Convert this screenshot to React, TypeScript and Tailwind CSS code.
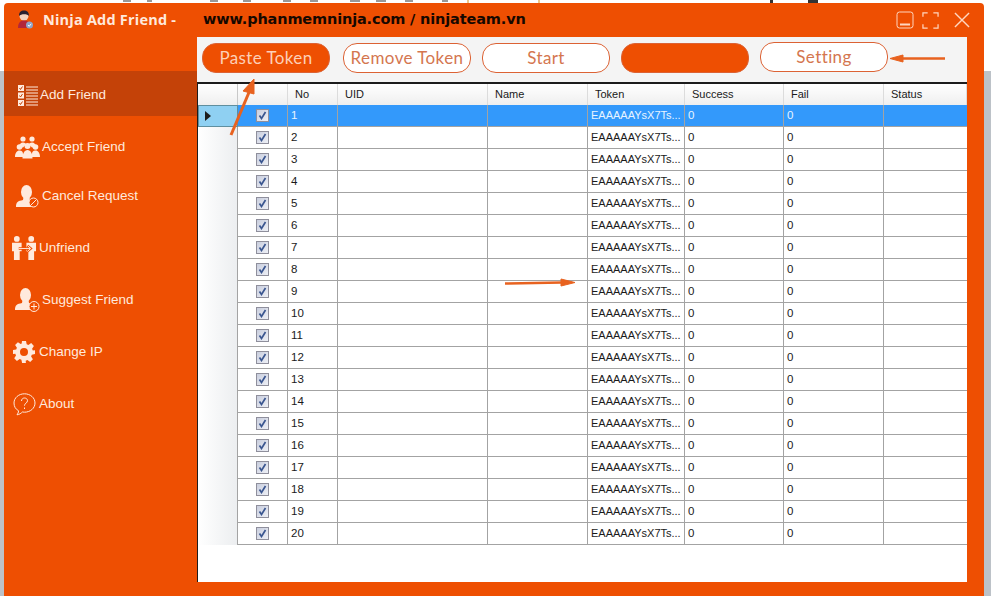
import { ReactNode } from "react"

const rows = Array.from({ length: 20 }, (_, i) => i + 1)

// widths of the grid columns, row header first
const cols = [
  { name: "", cls: "w-[50px]" },
  { name: "No", cls: "w-[50px]" },
  { name: "UID", cls: "w-[150px]" },
  { name: "Name", cls: "w-[100px]" },
  { name: "Token", cls: "w-[97px]" },
  { name: "Success", cls: "w-[99px]" },
  { name: "Fail", cls: "w-[100px]" },
  { name: "Status", cls: "flex-1" },
]

function Person() {
  return (
    <g fill="#ffeadd">
      <ellipse cx="10.500" cy="7" rx="5.500" ry="7" />
      <path d="M7.500 12 L13.500 12 L14 15 C18 16 20 17 20 22 L0 22 C0 17 2 16 7 15 Z" />
    </g>
  )
}

const icons: Record<string, ReactNode> = {
  add: (
    <svg width="20" height="21" viewBox="0 0 20 21" fill="none">
      <rect x="0" y="0" width="6" height="6" fill="#ffeadd" />
      <rect x="0" y="7.500" width="6" height="6" fill="#ffeadd" />
      <rect x="0" y="15" width="6" height="6" fill="#ffeadd" />
      <path d="M1.500 3l1 1.500 2-3M1.500 10.500l1 1.500 2-3M1.500 18l1 1.500 2-3" stroke="#c44208" strokeWidth="1" />
      <path d="M8 2h12M8 5h12M8 8h12M8 11h12M8 14h12M8 17h12M8 20h12" stroke="#ffeadd" strokeWidth="1" />
    </svg>
  ),
  accept: (
    <svg width="26" height="23" viewBox="0 0 26 23" fill="#ffeadd">
      <circle cx="8" cy="3" r="2.600" />
      <circle cx="17" cy="3" r="2.600" />
      <path d="M4 11c0-3 2-4.500 4-4.500s3 1 3 2l-3 3H4zM21 11c0-3-2-4.500-4-4.500s-3 1-3 2l3 3h4z" />
      <circle cx="4.500" cy="11" r="2.800" />
      <circle cx="20.500" cy="11" r="2.800" />
      <circle cx="12.500" cy="10" r="3" />
      <path d="M0 21c0-4 2-6.500 4.500-6.500S8 16 8 18v3zM25 21c0-4-2-6.500-4.500-6.500S17 16 17 18v3z" />
      <path d="M7.500 22.500c0-5 2-8.500 5-8.500s5 3.500 5 8.500z" />
    </svg>
  ),
  cancel: (
    <svg width="23" height="23" viewBox="0 0 23 23" fill="none">
      <Person />
      <circle cx="17.500" cy="17.500" r="4.500" fill="#f04e00" stroke="#ffeadd" />
      <path d="M14.500 20.500l6-6" stroke="#ffeadd" />
    </svg>
  ),
  unfriend: (
    <svg width="25" height="24" viewBox="0 0 26 25" fill="#ffeadd">
      <circle cx="5" cy="3" r="3" />
      <circle cx="20" cy="3" r="3" />
      <path d="M0 7h10v9H8v9H2v-9H0z" />
      <path d="M15 7h10v9h-2v9h-6v-9h-2z" />
      <path d="M7 13h12M16 10l3.500 3-3.500 3" fill="none" stroke="#f04e00" strokeWidth="2.600" />
      <path d="M7 13h12M16 10l3.500 3-3.500 3" fill="none" stroke="#ffeadd" strokeWidth="1" />
    </svg>
  ),
  suggest: (
    <svg width="25" height="24" viewBox="0 0 25 24" fill="none">
      <Person />
      <circle cx="19" cy="18.500" r="5" fill="#f04e00" stroke="#ffeadd" />
      <path d="M19 15.500v6M16 18.500h6" stroke="#ffeadd" />
    </svg>
  ),
  gear: (
    <svg width="22" height="22" viewBox="0 0 22 22">
      <path
        fill="#ffeadd"
        fillRule="evenodd"
        d="M9 0h4l.7 3.200 1.700.7L18.200 2.100l2.700 2.800-1.800 2.800.7 1.700L22 9.200v3.800l-3.200.7-.7 1.700 1.800 2.800-2.700 2.700-2.800-1.800-1.700.7L12.900 22H9.100l-.7-3.200-1.700-.7-2.800 1.800L1.200 17.200 3 14.400l-.7-1.700L0 12.900V9.100l3.200-.7.7-1.700L2.100 3.900 4.900 1.200l2.800 1.800 1-.5zM11 7a4 4 0 1 0 0 8 4 4 0 0 0 0-8z"
      />
    </svg>
  ),
  about: (
    <svg width="23" height="23" viewBox="0 0 23 23" fill="none" stroke="#ffeadd">
      <path d="M11.500 .8c5.800 0 10.500 4 10.500 9.200s-4.700 9.200-10.500 9.200c-.8 0-1.500-.1-2.200-.2-1 1.200-3 2.600-5.300 2.800 1-1 1.500-2.400 1.600-4C2.500 16.200 1 13.300 1 10 1 4.800 5.700.8 11.500.8z" />
      <path d="M8.500 8c0-1.800 1.300-3 3-3s3 1.100 3 2.700c0 2.300-3 2.500-3 5M11.500 14.500v1.500" />
    </svg>
  ),
}

const menu = [
  { key: "add", label: "Add Friend", active: true, iconCls: "ml-[14px] w-[22px]" },
  { key: "accept", label: "Accept Friend", iconCls: "ml-[11px] w-[27px]" },
  { key: "cancel", label: "Cancel Request", iconCls: "ml-[12px] w-[26px]", shift: "-mt-[3px]" },
  { key: "unfriend", label: "Unfriend", iconCls: "ml-[8px] w-[27px]" },
  { key: "suggest", label: "Suggest Friend", iconCls: "ml-[11px] w-[27px]" },
  { key: "gear", label: "Change IP", iconCls: "ml-[9px] w-[26px]" },
  { key: "about", label: "About", iconCls: "ml-[9px] w-[26px]" },
]

function ToolButton({ label, filled, cls }: { label?: string; filled?: boolean; cls?: string }) {
  return (
    <div
      className={`flex h-[30px] w-[128px] items-center justify-center rounded-[14px] border border-[#dc6234] text-[17px] font-normal tracking-[0.4px] ${
        filled ? "bg-[#ee4f02] text-[#fdd0b8]" : "bg-white text-[#d4764f]"
      } ${cls ?? ""}`}
    >
      {label}
    </div>
  )
}

function Check() {
  return (
    <div className="flex h-[13px] w-[13px] items-center justify-center border border-[#8f8f9c] bg-gradient-to-br from-[#c9cede] to-[#eef0f6]">
      <svg width="9" height="9" viewBox="0 0 9 9" fill="none">
        <path d="M1.500 4.500l2 3 4-6.500" stroke="#3a5690" strokeWidth="1.700" />
      </svg>
    </div>
  )
}

function Row({ n }: { n: number }) {
  const on = n === 1
  const text = on ? "text-[#e8f4ff]" : "text-[#1a1a1a]"
  const cell = `flex items-center border-r border-b border-[#a3a3a3] px-[3px] ${on ? "bg-[#3399fb]" : "bg-white"}`
  return (
    <div className={`flex h-[22px] text-[11.500px] ${text}`}>
      <div
        className={`flex w-[40px] items-center pl-[6px] border-r ${
          on ? "bg-[#8fd0f2] border border-[#5f8f9f]" : "bg-gradient-to-r from-white to-[#eceef0] border-[#a3a3a3]"
        }`}
      >
        {on && <div className="h-0 w-0 border-y-[5px] border-l-[6px] border-y-transparent border-l-[#1c1c1c]" />}
      </div>
      <div className={`${cell} w-[50px] justify-center`}>
        <Check />
      </div>
      <div className={`${cell} w-[50px]`}>{n}</div>
      <div className={`${cell} w-[150px]`} />
      <div className={`${cell} w-[100px]`} />
      <div className={`${cell} w-[97px] whitespace-nowrap text-[11px]`}>EAAAAAYsX7Ts...</div>
      <div className={`${cell} w-[99px]`}>0</div>
      <div className={`${cell} w-[100px]`}>0</div>
      <div className={`${cell} flex-1 border-r-0`} />
    </div>
  )
}

export default function App() {
  return (
    <div className="relative flex h-[596px] w-[991px] flex-col overflow-hidden bg-white font-['Liberation_Sans',sans-serif]">
      {/* bits of the desktop window behind */}
      <div className="flex h-[3px] items-start bg-white">
        <div className="ml-[123px] h-[2px] w-[8px] bg-[#999]" />
        <div className="ml-[16px] h-[2px] w-[5px] bg-[#999]" />
        <div className="ml-[58px] h-[2px] w-[8px] bg-[#999]" />
        <div className="ml-[25px] h-[2px] w-[8px] bg-[#999]" />
        <div className="ml-[32px] h-[2px] w-[8px] bg-[#999]" />
        <div className="ml-[19px] h-[2px] w-[8px] bg-[#999]" />
        <div className="ml-[32px] h-[2px] w-[10px] bg-[#999]" />
        <div className="ml-[16px] h-[2px] w-[10px] bg-[#999]" />
        <div className="ml-[19px] h-[2px] w-[8px] bg-[#999]" />
        <div className="ml-[29px] h-[2px] w-[6px] bg-[#999]" />
        <div className="ml-[19px] h-[3px] w-[2px] bg-[#efc98a]" />
        <div className="ml-[69px] h-[3px] w-[2px] bg-[#efc98a]" />
        <div className="ml-[230px] h-[3px] w-[3px] bg-[#333]" />
        <div className="ml-[35px] h-[3px] w-[10px] bg-[#333]" />
      </div>

      <div className="flex flex-1">
        <div className="flex w-[4px] flex-col">
          <div className="h-[68px] bg-white" />
          <div className="flex-1 bg-[#bcc2c8]" />
        </div>

        {/* main window */}
        <div className="flex w-[980px] flex-col rounded-t-[4px] bg-[#ee4f02]">
          <div className="flex h-[34px] items-center">
            <svg className="ml-[12px]" width="18" height="20" viewBox="0 0 18 20">
              <circle cx="8" cy="6" r="4.500" fill="#f5d3c0" />
              <path d="M3 6c0-4 2-5.500 5-5.500S13 2 13 6c-1.500-2.500-8-2.500-10 0z" fill="#2b2030" />
              <path d="M2 18c0-5 2-7.500 6-7.500s6 2.500 6 7.500z" fill="#b3263a" />
              <circle cx="13.500" cy="15" r="3.500" fill="#8fa4c8" />
              <path d="M12 15l1.200 1.300 2-2.500" stroke="#fff" fill="none" />
            </svg>
            <span className="ml-[9px] w-[160px] whitespace-nowrap font-['Open_Sans',sans-serif] text-[14.500px] font-bold tracking-[0.2px] text-[#ffe9dc]">
              Ninja Add Friend -
            </span>
            <span className="whitespace-nowrap font-['DejaVu_Sans',sans-serif] text-[14.500px] font-bold tracking-[-0.15px] text-[#160800]">
              www.phanmemninja.com / ninjateam.vn
            </span>
            <div className="ml-auto mr-[14px] flex items-center">
              <svg width="18" height="18" viewBox="0 0 18 18" fill="none" stroke="#ffd6c0">
                <rect x="1" y="1" width="16" height="16" rx="2.500" />
                <path d="M4 13.500h10" strokeWidth="2" />
              </svg>
              <svg className="ml-[8px]" width="17" height="17" viewBox="0 0 18 18" fill="none" stroke="#ffd6c0" strokeWidth="1.300">
                <path d="M1 5V1h5M12 1h5v4M17 13v4h-5M6 17H1v-4" />
              </svg>
              <svg className="ml-[15px]" width="16" height="16" viewBox="0 0 17 17" fill="none" stroke="#ffd6c0" strokeWidth="1.500">
                <path d="M1 1l15 15M16 1L1 16" />
              </svg>
            </div>
          </div>

          <div className="flex flex-1">
            <nav className="flex w-[193px] flex-col gap-[7px] pt-[34px]">
              {menu.map((m) => (
                <div
                  key={m.key}
                  className={`flex h-[45px] items-center pt-[3px] text-[13.500px] text-[#ffeadd] ${m.active ? "bg-[#c44208]" : ""} ${m.shift ?? ""}`}
                >
                  <div className={`flex shrink-0 items-center ${m.iconCls}`}>{icons[m.key]}</div>
                  <span className="whitespace-nowrap">{m.label}</span>
                </div>
              ))}
            </nav>

            <div className="mb-[14px] flex w-[770px] flex-col bg-white">
              <div className="flex h-[47px] border-b-2 border-b-[#1c1c1c] bg-[#f4f4f4] pl-[5px] pt-[6px] font-['Lato',sans-serif]">
                <ToolButton label="Paste Token" filled />
                <ToolButton label="Remove Token" cls="ml-[13px]" />
                <ToolButton label="Start" cls="ml-[11px]" />
                <ToolButton filled cls="ml-[11px]" />
                <ToolButton label="Setting" cls="ml-[11px] -mt-[1px]" />
              </div>

              <div className="flex flex-1 flex-col border-l border-l-[#1c1c1c]">
                <div className="flex h-[21px] bg-gradient-to-b from-white to-[#efefef] text-[11px] text-[#1a1a1a]">
                  <div className="w-[40px] border-r border-[#c8c8c8]" />
                  {cols.map((c, i) => (
                    <div
                      key={i}
                      className={`flex items-center border-r border-[#dcdcdc] pl-[7px] ${c.cls}`}
                    >
                      {c.name}
                    </div>
                  ))}
                </div>
                {rows.map((n) => (
                  <Row key={n} n={n} />
                ))}
              </div>
            </div>
          </div>
        </div>

        <div className="flex flex-1 flex-col">
          <div className="h-[68px] bg-white" />
          <div className="flex-1 bg-[#bcc2c8]" />
        </div>
      </div>

      {/* hand drawn arrows on top of the screenshot */}
      <svg className="absolute inset-0" width="991" height="596" viewBox="0 0 991 596" fill="#e8621f" stroke="#e8621f">
        <path d="M231 135L250 90" strokeWidth="3" fill="none" />
        <path d="M254 79L243 91L254 94Z" />
        <path d="M945 58.500H898" strokeWidth="2.500" fill="none" />
        <path d="M890 58.500L903 55V62Z" />
        <path d="M505 283.500L562 282.500" strokeWidth="2.500" fill="none" />
        <path d="M575 282.500L561 279V286Z" />
      </svg>
    </div>
  )
}
